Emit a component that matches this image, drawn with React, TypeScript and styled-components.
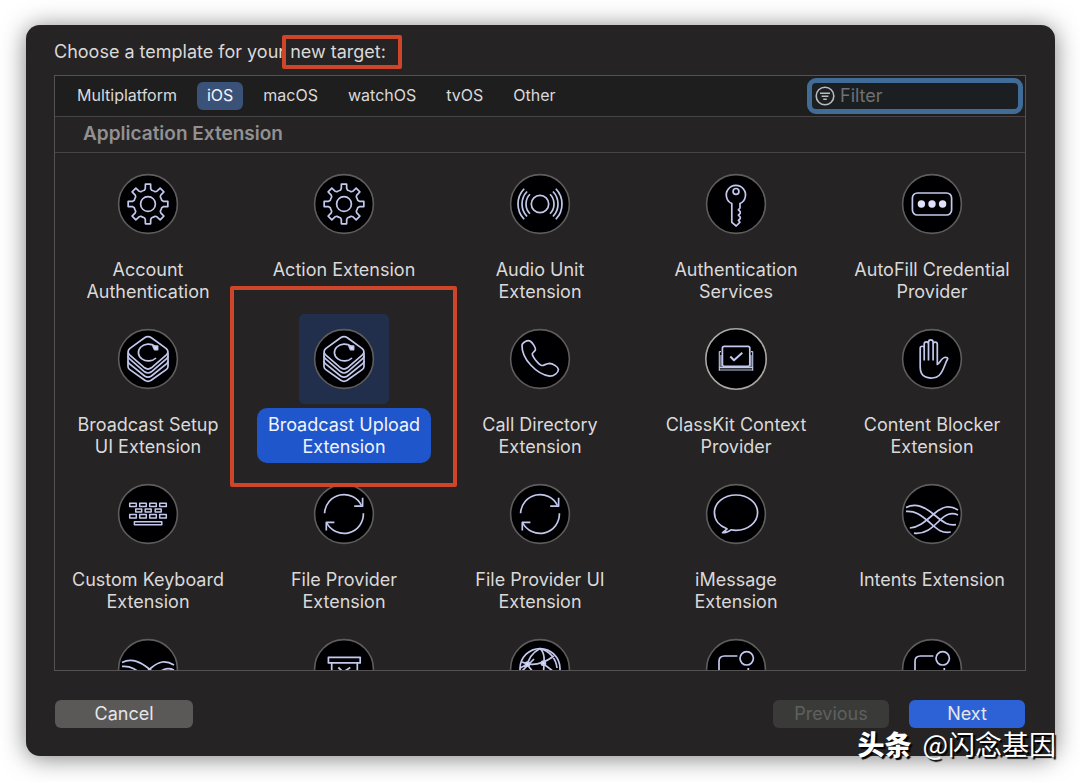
import React, { useState } from "react";
import styled, { createGlobalStyle, css } from "styled-components";

const GlobalStyle = createGlobalStyle`
  * { box-sizing: border-box; }
  body { margin: 0; background: #fff; font-family: Inter, "Liberation Sans", sans-serif; }
  button, input { font-family: inherit; }
`;

const Page = styled.main`
  min-height: 100vh;
  padding: 25px 25px 26px 26px;
`;

const Dialog = styled.section`
  position: relative;
  display: flex;
  flex-direction: column;
  height: calc(100vh - 51px);
  padding: 15px 29px 28px 28px;
  border-radius: 14px;
  background: #252324;
  color: #dad9d9;
  box-shadow: 0 2px 24px rgba(0, 0, 0, 0.5);
`;

const Title = styled.h1`
  margin: 0 0 11px;
  font-size: 18px;
  font-weight: 400;
  line-height: 24px;
`;

const frame = css`
  content: "";
  position: absolute;
  border: 4px solid #cf4529;
  border-radius: 2px;
  pointer-events: none;
`;

const Marked = styled.span`
  position: relative;
  &::after {
    ${frame}
    inset: -6px -16px -7px -8px;
  }
`;

const Panel = styled.div`
  display: flex;
  flex: 1;
  flex-direction: column;
  min-height: 0;
  border: 1px solid #545252;
`;

const Toolbar = styled.div`
  display: flex;
  align-items: center;
  justify-content: space-between;
  height: 41px;
  padding: 0 2px 0 12px;
  border-bottom: 1px solid #464445;
  background: #1e1e1f;
`;

const Tabs = styled.nav`
  display: flex;
  gap: 10px;
`;

const Tab = styled.button<{ $active: boolean }>`
  height: 28px;
  padding: 0 10px 2px;
  border: 0;
  border-radius: 6px;
  background: ${(p) => (p.$active ? "#3a5278" : "transparent")};
  color: ${(p) => (p.$active ? "#f4f6fa" : "#dad9d9")};
  font-size: 16px;
  font-weight: 400;
  line-height: 20px;
`;

const FilterField = styled.label`
  display: flex;
  align-items: center;
  gap: 5px;
  width: 216px;
  height: 36px;
  padding: 0 3px;
  border: 5px solid #416c98;
  border-radius: 9px;
  background: #1c1f21;
`;

const FilterInput = styled.input`
  flex: 1;
  min-width: 0;
  padding: 0;
  border: 0;
  outline: 0;
  background: transparent;
  color: #dad9d9;
  font-size: 18px;
  line-height: 22px;
  &::placeholder {
    color: #6f7173;
    opacity: 1;
  }
`;

const SectionTitle = styled.h2`
  margin: 0;
  padding: 6px 28px 7px;
  border-bottom: 1px solid #464445;
  color: #929091;
  font-size: 19px;
  font-weight: 600;
  line-height: 22px;
`;

const Templates = styled.div`
  display: grid;
  flex: 1;
  grid-template-columns: repeat(5, 1fr);
  align-content: start;
  gap: 6px 10px;
  min-height: 0;
  padding-top: 6px;
  overflow: hidden;
`;

const Tile = styled.button<{ $selected: boolean }>`
  position: relative;
  z-index: ${(p) => (p.$selected ? 1 : 0)};
  display: flex;
  flex-direction: column;
  align-items: center;
  gap: 4px;
  min-height: 149px;
  padding: 0;
  border: 0;
  background: none;
  color: ${(p) => (p.$selected ? "#f1f4fb" : "#dad9d9")};
  ${(p) =>
    p.$selected &&
    css`
      &::after {
        ${frame}
        inset: -28px -20px -24px -21px;
      }
    `}
`;

const IconBox = styled.span<{ $selected: boolean }>`
  display: grid;
  place-items: center;
  width: 90px;
  height: 90px;
  border-radius: 5px;
  background: ${(p) => (p.$selected ? "#212f4c" : "transparent")};
`;

const Label = styled.span<{ $selected: boolean }>`
  padding: 6px 11px 5px;
  border-radius: 10px;
  background: ${(p) => (p.$selected ? "#2056cc" : "transparent")};
  font-size: 18px;
  line-height: 22px;
  white-space: pre;
`;

const Footer = styled.footer`
  display: flex;
  gap: 20px;
  padding: 29px 1px 0;
`;

const FooterButton = styled.button<{ $kind: "plain" | "primary" }>`
  min-width: ${(p) => (p.$kind === "plain" ? 138 : 116)}px;
  height: 28px;
  padding: 0 12px;
  border: 0;
  border-radius: 6px;
  background: ${(p) => (p.$kind === "plain" ? "#5a5958" : "#2c62d6")};
  color: #e6e6e8;
  font-size: 18px;
  line-height: 22px;
  &:disabled {
    background: #3a3b39;
    color: #5f605f;
  }
`;

const Spacer = styled.span`
  flex: 1;
`;

const Watermark = styled.div`
  position: absolute;
  right: -1px;
  bottom: -8px;
  display: flex;
  gap: 11px;
  color: #fff;
  font-family: "Noto Sans CJK SC", sans-serif;
  font-size: 27px;
  line-height: 40px;
  text-shadow: 2px 2px 1px #000;
`;

const Brand = styled.b`
  font-weight: 900;
`;

function polar(r: number, deg: number) {
  const a = (deg * Math.PI) / 180;
  return `${(30 + r * Math.cos(a)).toFixed(2)} ${(30 + r * Math.sin(a)).toFixed(2)}`;
}

// Eight flared teeth joined by concave valleys.
const gearPath =
  Array.from({ length: 8 }, (_, i) => {
    const a = i * 45;
    return `${i ? "L" : "M"}${polar(14.2, a - 15)}L${polar(15.6, a - 10)}L${polar(20, a - 7.5)}L${polar(20, a + 7.5)}L${polar(15.6, a + 10)}L${polar(14.2, a + 15)}A14 14 0 0 1 ${polar(14.2, a + 30)}`;
  }).join("") + "Z";

const arc = (r: number, from: number, to: number) =>
  `M${polar(r, from)}A${r} ${r} 0 0 1 ${polar(r, to)}`;

const glyphs = {
  gear: (
    <>
      <path d={gearPath} />
      <circle cx="30" cy="30" r="7.4" />
    </>
  ),
  audio: (
    <>
      <circle cx="30" cy="30" r="8.7" />
      {[14, 18, 22].map((r) => (
        <path key={r} d={arc(r, -44, 44) + arc(r, 136, 224)} />
      ))}
    </>
  ),
  key: (
    <>
      <path d="M25.8 29.6A9.6 9.6 0 1 1 34 29.6V34l-1.6 1.8 1.8 1.8v1.8l-1.8 1.8 1.8 1.8v1.6l-1.8 1.8 1.6 1.8-3.8 3.8-4.4-3.6Z" />
      <circle cx="30" cy="17.4" r="2.9" />
    </>
  ),
  password: (
    <>
      <rect x="10.4" y="19" width="39.2" height="22" rx="5" />
      <g fill="#dfe2fa" stroke="none">
        <circle cx="19.4" cy="30" r="3.7" />
        <circle cx="30" cy="30" r="3.7" />
        <circle cx="40.6" cy="30" r="3.7" />
      </g>
    </>
  ),
  layers: (
    <>
      <path d="M26.6 8.8Q30 6.6 33.4 8.8L48 19.4Q51.6 22.6 48.4 25.8L33.4 38.8Q30 41.4 26.6 38.8L11.6 25.8Q8.4 22.6 12 19.4Z" />
      <path d="M10 23.5V37.6q0 1.6 1.5 2.8L26.8 51.3q3.2 2 6.4 0L48.5 40.4q1.5-1.2 1.5-2.8V23.5" />
      <path d="M10 27q.2 1.6 1.6 2.9L26.6 42.8q3.4 2.4 6.8 0L48.4 29.9Q49.8 28.6 50 27M10 32q.2 1.6 1.6 2.9L26.6 47q3.4 2.3 6.8 0L48.4 34.9Q49.8 33.6 50 32" />
      <path d="M37 17.2A10 8.4 0 1 0 38 29" />
      <path d="M35 17.2h4.600v3.400h-3z" fill="#dfe2fa" />
    </>
  ),
  phone: (
    <path d="M12 16.2C12.4 13 17.8 10.6 20.4 12.2 22.5 13.6 25.6 18.5 25.5 20.4 25.4 22.3 22.4 23.2 22.3 24.8 22.2 27.8 28.8 35.7 31.8 36.5 33.4 36.9 36.5 34.4 39.5 34.3 42.3 34.3 48.3 37.8 48.4 40.4 48.3 43.8 43.8 47.2 39.8 47.2 26.5 45.5 11.5 29.5 12 16.2Z" />
  ),
  classroom: (
    <>
      <rect x="16.4" y="17.4" width="27.4" height="20" rx="1.8" />
      <path d="M24.3 27.5l3.7 3.8 8.3-7.6" strokeWidth="2" />
      <path d="M13.3 22.6v19.2M15 26v12.6h30V26M46.7 22.6v19.2M13.3 41h33.4M13.3 22.6H15M45 22.6h1.7M13.3 38.6h33.4" strokeWidth="1.1" />
    </>
  ),
  hand: (
    <path d="M18.2 38V19.2c0-2.6 4-2.6 4 0V31.5M22.2 31.5V15.2c0-3 4.3-3 4.3 0V31.5M26.5 15V13.5c0-3.4 4.6-3.4 4.6 0V31.5M31.1 15.2c0-2.9 4.2-2.9 4.2 0V35.5c2.2-1 4.3-6.5 7.2-7 2.5-.4 3.7.6 3 1.8C42.5 35 41.8 42 37 46.5c-3 3-10 3.2-13.8 1.3C19.8 46.2 18.2 43 18.2 38" />
  ),
  keyboard: (
    <g strokeWidth="1.5">
      {[11.7, 21.7, 31.7, 41.7].map((x) => (
        <React.Fragment key={x}>
          <rect x={x} y="19.2" width="6.6" height="3.4" />
          <rect x={x} y="30.6" width="6.6" height="3.4" />
        </React.Fragment>
      ))}
      {[17.7, 27.2, 37.2].map((x) => (
        <rect key={x} x={x} y="24.9" width="6" height="3.2" />
      ))}
      <rect x="16.4" y="37.8" width="27.4" height="3" />
    </g>
  ),
  sync: (
    <>
      <path d={arc(19.4, 182, 334) + arc(19.4, -2, 154)} />
      <path d="M48.6 13.8V22.1H40.2M20.4 38.4H12.3V46.4" />
    </>
  ),
  bubble: (
    <path d="M21 44.8C13.5 42.2 8.4 36.2 8.4 28.6 8.4 18.7 18 11 30 11s21.6 7.7 21.6 17.6S42 46.3 30 46.3c-1.800 0-3.400-.1-5-.5-1.800 1.500-4.500 2.900-8.400 2.900 1.800-1.400 3.200-2.600 4.400-3.900Z" />
  ),
  intents: (
    <>
      <path d="M4 23.5C14 18.5 23 23 32.5 31S46 41.5 54 40.7" />
      <path d="M4 27.4C13 26.5 19 31 26.5 37.5S39 50 48.8 48" />
      <path d="M7.8 44C18 43.5 25 35.5 33 29S47 20.5 56 26" />
      <path d="M12 49.2C23 50.5 30 44 37 37S49 28 56 31" />
    </>
  ),
  box: (
    <>
      <rect x="14.4" y="18.3" width="31.8" height="5.6" />
      <path d="M17.7 24V44H43.3V24M24.3 28.5l5 4.5 7-4.5M29.3 33v8" />
    </>
  ),
  globe: (
    <>
      <circle cx="30" cy="29.6" r="20" />
      <path d="M30 9.6C22 14 18 20 17 28M30 9.6C35 14 34.5 20 33.5 33M30 9.6C40 12 46 20 47 29M12 23C20 27 30 27 44 17M33 24.5L48 36M11 33L24 20M10 29L17 25.5 24 34" />
      <circle cx="17.5" cy="25.2" r="2" fill="#dfe2fa" />
      <circle cx="33.4" cy="24.2" r="2" fill="#dfe2fa" />
    </>
  ),
  badge: (
    <>
      <path d="M31.4 17H18.5Q13 17 13 22.5V40Q13 45 18 45H37Q42.3 45 42.3 40V29" />
      <circle cx="40.7" cy="19.3" r="6.7" />
    </>
  ),
};

type GlyphName = keyof typeof glyphs;

function TemplateIcon({ name }: { name: GlyphName }) {
  const bright = name === "classroom";
  return (
    <svg width="62" height="62" viewBox="-1 -1 62 62" aria-hidden="true">
      <circle
        cx="30"
        cy="30"
        r={bright ? 30.2 : 29.4}
        fill="#000003"
        stroke={bright ? "#aaa8a2" : "#5f5d5c"}
        strokeWidth="1.6"
      />
      <g fill="none" stroke="#c3c9ec" strokeWidth="1.7" strokeLinejoin="round">
        {glyphs[name]}
      </g>
    </svg>
  );
}

const templates: { label: string; icon: GlyphName }[] = [
  { label: "Account\nAuthentication", icon: "gear" },
  { label: "Action Extension", icon: "gear" },
  { label: "Audio Unit\nExtension", icon: "audio" },
  { label: "Authentication\nServices", icon: "key" },
  { label: "AutoFill Credential\nProvider", icon: "password" },
  { label: "Broadcast Setup\nUI Extension", icon: "layers" },
  { label: "Broadcast Upload\nExtension", icon: "layers" },
  { label: "Call Directory\nExtension", icon: "phone" },
  { label: "ClassKit Context\nProvider", icon: "classroom" },
  { label: "Content Blocker\nExtension", icon: "hand" },
  { label: "Custom Keyboard\nExtension", icon: "keyboard" },
  { label: "File Provider\nExtension", icon: "sync" },
  { label: "File Provider UI\nExtension", icon: "sync" },
  { label: "iMessage\nExtension", icon: "bubble" },
  { label: "Intents Extension", icon: "intents" },
  { label: "", icon: "intents" },
  { label: "", icon: "box" },
  { label: "", icon: "globe" },
  { label: "", icon: "badge" },
  { label: "", icon: "badge" },
];

const platforms = ["Multiplatform", "iOS", "macOS", "watchOS", "tvOS", "Other"];

export default function App() {
  const [platform, setPlatform] = useState("iOS");
  const [selected, setSelected] = useState(6);

  return (
    <>
      <GlobalStyle />
      <Page>
        <Dialog>
          <Title>
            Choose a template for your <Marked>new target:</Marked>
          </Title>
          <Panel>
            <Toolbar>
              <Tabs>
                {platforms.map((name) => (
                  <Tab key={name} $active={name === platform} onClick={() => setPlatform(name)}>
                    {name}
                  </Tab>
                ))}
              </Tabs>
              <FilterField>
                <svg width="20" height="20" viewBox="0 0 20 20" fill="none" stroke="#b9bbbc" strokeWidth="1.6" aria-hidden="true">
                  <circle cx="10" cy="10" r="8.8" />
                  <path d="M5 7.2h10M6.6 10.2h6.8M8.2 13.2h3.6" />
                </svg>
                <FilterInput placeholder="Filter" aria-label="Filter" />
              </FilterField>
            </Toolbar>
            <SectionTitle>Application Extension</SectionTitle>
            <Templates>
              {templates.map((item, i) => (
                <Tile key={i} $selected={i === selected} onClick={() => setSelected(i)}>
                  <IconBox $selected={i === selected}>
                    <TemplateIcon name={item.icon} />
                  </IconBox>
                  <Label $selected={i === selected}>{item.label}</Label>
                </Tile>
              ))}
            </Templates>
          </Panel>
          <Footer>
            <FooterButton $kind="plain">Cancel</FooterButton>
            <Spacer />
            <FooterButton $kind="primary" disabled>
              Previous
            </FooterButton>
            <FooterButton $kind="primary">Next</FooterButton>
          </Footer>
          <Watermark>
            <Brand>头条</Brand>
            <span>@闪念基因</span>
          </Watermark>
        </Dialog>
      </Page>
    </>
  );
}
